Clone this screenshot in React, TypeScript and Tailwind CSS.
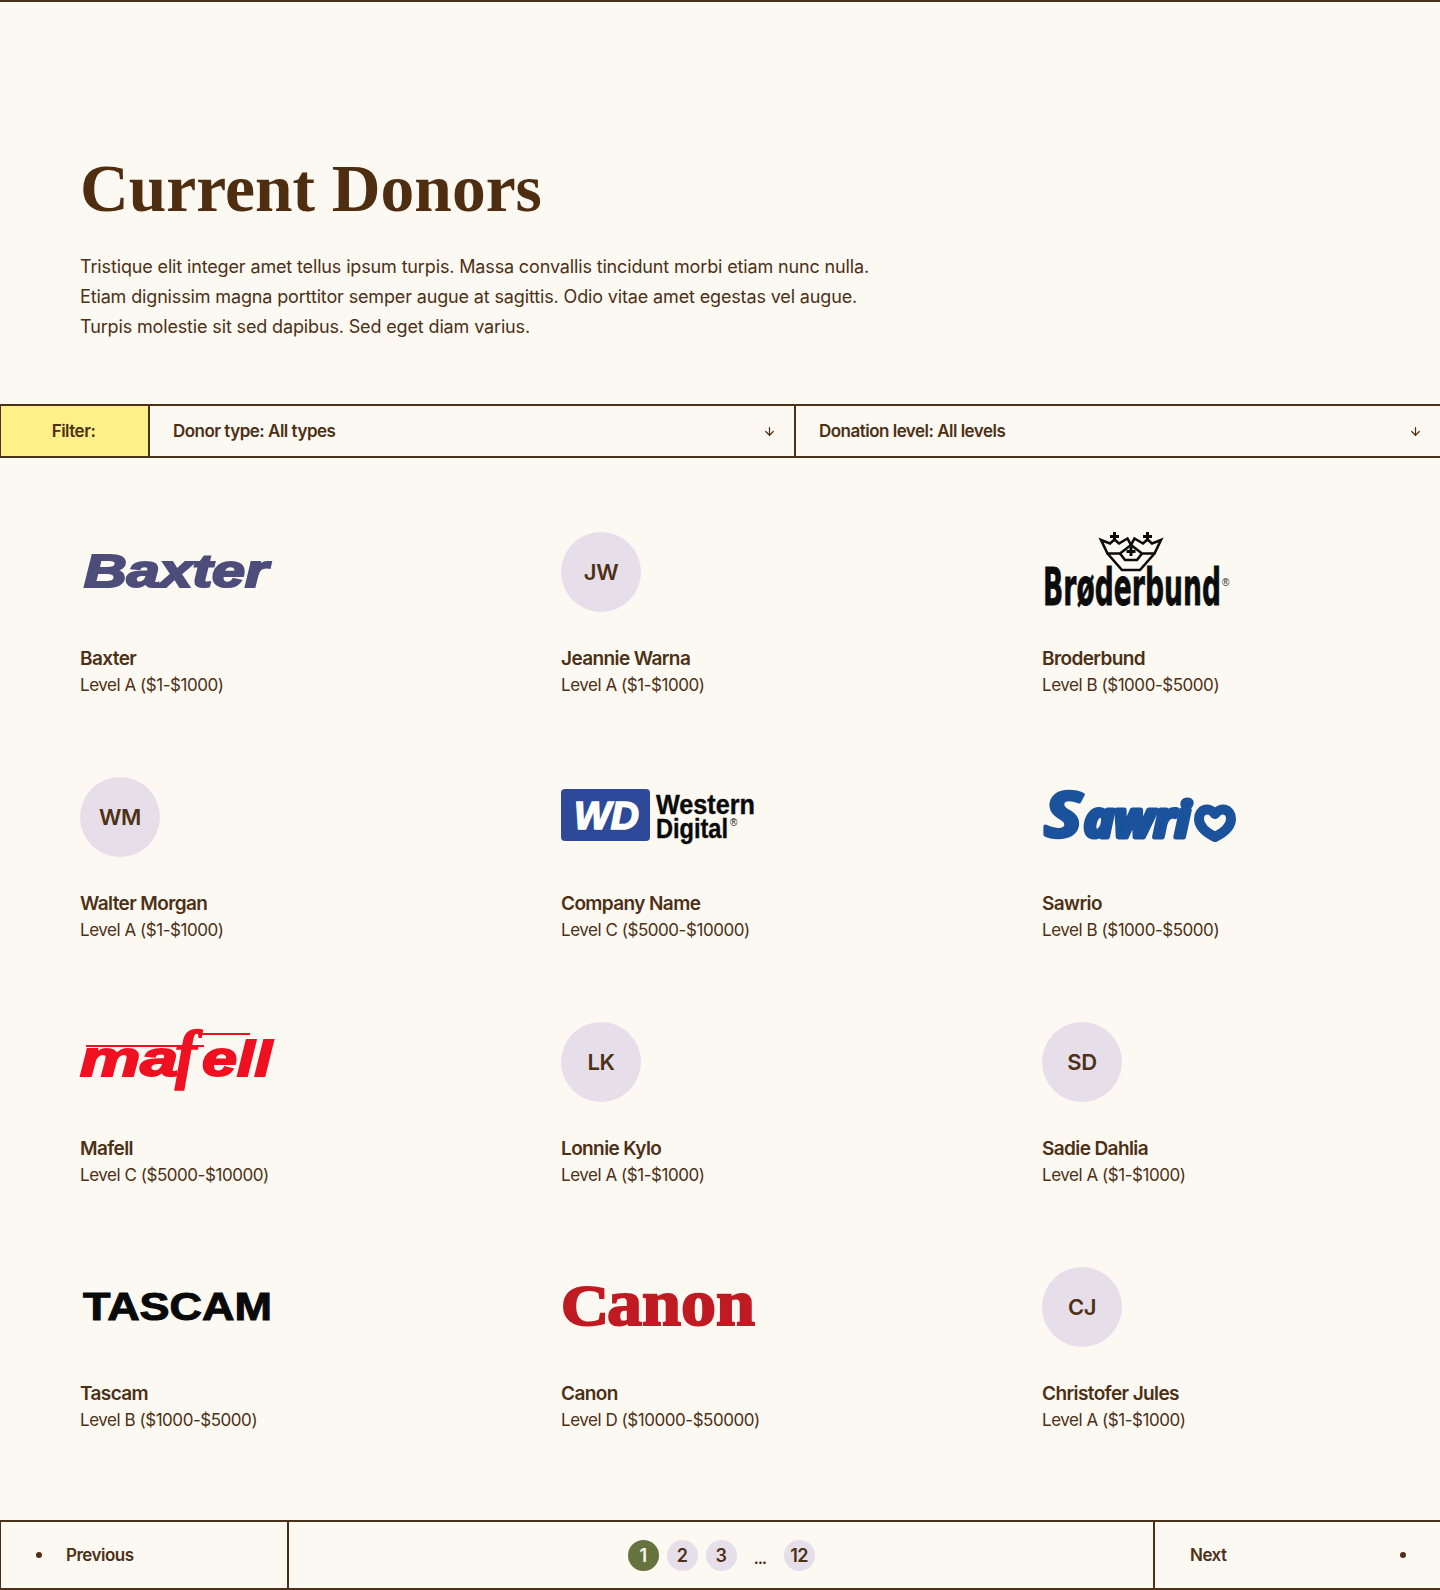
import { ArrowDown } from "lucide-react";

const sans = "[font-family:Inter,'Liberation_Sans',sans-serif]";

function Baxter() {
  return (
    <svg width="194" height="80" viewBox="0 0 194 80" className="overflow-visible">
      <text x="4" y="55" textLength="184" lengthAdjust="spacingAndGlyphs" fontFamily="'Liberation Sans'" fontWeight="700" fontStyle="italic" fontSize="46" fill="#4d4d7b" stroke="#4d4d7b" strokeWidth="2.2">Baxter</text>
    </svg>
  );
}

function Broderbund() {
  return (
    <svg width="194" height="80" viewBox="0 0 194 80" className="overflow-visible">
      <g fill="none" stroke="#0c0c0c" strokeWidth="2.6" strokeLinejoin="miter">
        <path d="M59 8 L68 11.500 L72.500 7.500 L77 11.500 L85.500 6.500 L89 13 L78 21.500 L65.500 21.500 Z" />
        <path d="M119 8 L110 11.500 L105.500 7.500 L101 11.500 L92.500 6.500 L89 13 L100 21.500 L112.500 21.500 Z" />
        <path d="M65.500 21.500 L80 38 L98 38 L112.500 21.500" />
        <path d="M78 21.500 L83 28 L95 28 L100 21.500" />
      </g>
      <g fill="#0c0c0c">
        <rect x="71" y="0" width="3" height="8" />
        <rect x="68" y="3" width="9" height="3" />
        <rect x="104" y="0" width="3" height="8" />
        <rect x="101" y="3" width="9" height="3" />
        <rect x="87.500" y="15" width="3" height="9" />
        <rect x="84.500" y="18" width="9" height="3" />
      </g>
      <text x="1" y="73" textLength="178" lengthAdjust="spacingAndGlyphs" fontFamily="'DejaVu Sans'" fontWeight="700" fontSize="52" fill="#0c0c0c" stroke="#0c0c0c" strokeWidth="0.8">Brøderbund</text>
      <text x="180" y="54" fontFamily="'Liberation Sans'" fontSize="10" fill="#222">®</text>
    </svg>
  );
}

function WesternDigital() {
  return (
    <svg width="194" height="80" viewBox="0 0 194 80" className="overflow-visible">
      <rect x="0" y="12" width="89" height="52" rx="4" fill="#2d4a9a" />
      <text x="13" y="52" textLength="65" lengthAdjust="spacingAndGlyphs" fontFamily="'Liberation Sans'" fontWeight="700" fontStyle="italic" fontSize="38" fill="#fff" stroke="#fff" strokeWidth="1.6">WD</text>
      <text x="95" y="37" textLength="99" lengthAdjust="spacingAndGlyphs" fontFamily="'Liberation Sans'" fontWeight="700" fontSize="27" fill="#0a0a0a" stroke="#0a0a0a" strokeWidth="0.4">Western</text>
      <text x="95" y="61" textLength="72" lengthAdjust="spacingAndGlyphs" fontFamily="'Liberation Sans'" fontWeight="700" fontSize="27" fill="#0a0a0a" stroke="#0a0a0a" strokeWidth="0.4">Digital</text>
      <text x="169" y="49" fontFamily="'Liberation Sans'" fontSize="10" fill="#0a0a0a">®</text>
    </svg>
  );
}

function Sawrio() {
  return (
    <svg width="194" height="80" viewBox="0 0 194 80" className="overflow-visible">
      <text x="2" y="60" textLength="38" lengthAdjust="spacingAndGlyphs" fontFamily="'Open Sans'" fontStyle="italic" fontWeight="700" fontSize="62" fill="#1a529c" stroke="#1a529c" strokeWidth="3.5" strokeLinejoin="round">S</text>
      <text x="42" y="60" textLength="106" lengthAdjust="spacingAndGlyphs" fontFamily="'Open Sans'" fontStyle="italic" fontWeight="700" fontSize="48" fill="#1a529c" stroke="#1a529c" strokeWidth="5" strokeLinejoin="round">awri</text>
      <path d="M173 37 C168 30 157 31 157 42 C157 50 165 56 173 60 C181 56 189 50 189 42 C189 31 178 30 173 37 Z" fill="none" stroke="#1a529c" strokeWidth="10" strokeLinejoin="round" />
    </svg>
  );
}

function Mafell() {
  return (
    <svg width="194" height="80" viewBox="0 0 194 80" className="overflow-visible">
      <rect x="6" y="23" width="118" height="2" fill="#ef1021" />
      <rect x="118" y="11" width="52" height="2" fill="#ef1021" />
      <text x="0" y="54" textLength="98" lengthAdjust="spacingAndGlyphs" fontFamily="'Liberation Sans'" fontWeight="700" fontStyle="italic" fontSize="50" fill="#ef1021" stroke="#ef1021" strokeWidth="2">ma</text>
      <text x="95" y="54" fontFamily="'Liberation Serif'" fontWeight="700" fontStyle="italic" fontSize="66" fill="#ef1021" stroke="#ef1021" strokeWidth="1.4">f</text>
      <text x="122" y="54" textLength="70" lengthAdjust="spacingAndGlyphs" fontFamily="'Liberation Sans'" fontWeight="700" fontStyle="italic" fontSize="50" fill="#ef1021" stroke="#ef1021" strokeWidth="2">ell</text>
    </svg>
  );
}

function Tascam() {
  return (
    <svg width="194" height="80" viewBox="0 0 194 80" className="overflow-visible">
      <text x="3" y="53" textLength="189" lengthAdjust="spacingAndGlyphs" fontFamily="'Liberation Sans'" fontWeight="700" fontSize="38" fill="#0a0a0a" stroke="#0a0a0a" strokeWidth="1">TASCAM</text>
    </svg>
  );
}

function Canon() {
  return (
    <svg width="194" height="80" viewBox="0 0 194 80" className="overflow-visible">
      <text x="0" y="58" textLength="48" lengthAdjust="spacingAndGlyphs" fontFamily="'Liberation Serif'" fontWeight="700" fontSize="56" fill="#c01a22" stroke="#c01a22" strokeWidth="2">C</text>
      <text x="46" y="58" textLength="148" lengthAdjust="spacingAndGlyphs" fontFamily="'Liberation Serif'" fontWeight="700" fontSize="66" fill="#c01a22" stroke="#c01a22" strokeWidth="2">anon</text>
    </svg>
  );
}

function Avatar({ t }: { t: string }) {
  return (
    <div className="flex h-20 w-20 items-center justify-center rounded-full bg-[#e6dfea] text-[22px] font-semibold tracking-[-0.02em] text-[#4d3015]">
      {t}
    </div>
  );
}

const donors: { name: string; level: string; logo: React.ReactNode }[] = [
  { name: "Baxter", level: "Level A ($1-$1000)", logo: <Baxter /> },
  { name: "Jeannie Warna", level: "Level A ($1-$1000)", logo: <Avatar t="JW" /> },
  { name: "Broderbund", level: "Level B ($1000-$5000)", logo: <Broderbund /> },
  { name: "Walter Morgan", level: "Level A ($1-$1000)", logo: <Avatar t="WM" /> },
  { name: "Company Name", level: "Level C ($5000-$10000)", logo: <WesternDigital /> },
  { name: "Sawrio", level: "Level B ($1000-$5000)", logo: <Sawrio /> },
  { name: "Mafell", level: "Level C ($5000-$10000)", logo: <Mafell /> },
  { name: "Lonnie Kylo", level: "Level A ($1-$1000)", logo: <Avatar t="LK" /> },
  { name: "Sadie Dahlia", level: "Level A ($1-$1000)", logo: <Avatar t="SD" /> },
  { name: "Tascam", level: "Level B ($1000-$5000)", logo: <Tascam /> },
  { name: "Canon", level: "Level D ($10000-$50000)", logo: <Canon /> },
  { name: "Christofer Jules", level: "Level A ($1-$1000)", logo: <Avatar t="CJ" /> },
];

function Page({ n, active }: { n: string; active?: boolean }) {
  return (
    <span
      className={
        "flex h-[31px] w-[31px] items-center justify-center rounded-full text-[18px] font-semibold tracking-[-0.03em] " +
        (active ? "bg-[#66733f] text-[#fcf9f3]" : "bg-[#e6dfea] text-[#4d3015]")
      }
    >
      {n}
    </span>
  );
}

function Select({ label }: { label: string }) {
  return (
    <div className="flex items-center justify-between border-l-2 border-[#4d3015] pl-[23px] pr-[18px]">
      <span className="pt-[2px] text-[17px] font-semibold tracking-[-0.03em]">{label}</span>
      <ArrowDown size={13} strokeWidth={2.25} />
    </div>
  );
}

export default function App() {
  return (
    <div className={`min-h-[1590px] bg-[#fcf9f3] text-[#4d3015] ${sans}`}>
      <div className="border-t-2 border-[#4d3015] px-20 pt-[149px]">
        <h1 className="[font-family:'Liberation_Serif',serif] text-[67.5px] font-bold leading-[76px] text-[#4f2d10]">
          Current Donors
        </h1>
        <p className="mt-[25px] w-[820px] text-[18px] leading-[30px] tracking-[-0.008em]">
          Tristique elit integer amet tellus ipsum turpis. Massa convallis tincidunt morbi etiam nunc nulla.
          <br />
          Etiam dignissim magna porttitor semper augue at sagittis. Odio vitae amet egestas vel augue.
          <br />
          Turpis molestie sit sed dapibus. Sed eget diam varius.
        </p>
      </div>

      <div className="mt-[62px] grid h-[54px] grid-cols-[148px_646px_1fr] border-y-2 border-[#4d3015]">
        <div className="flex items-center justify-center border-l border-[#4d3015] bg-[#fff08a] pr-[2px] pt-[2px] text-[17px] font-semibold tracking-[-0.03em]">
          Filter:
        </div>
        <Select label="Donor type: All types" />
        <Select label="Donation level: All levels" />
      </div>

      <div className="grid grid-cols-[repeat(3,318px)] gap-x-[163px] gap-y-[78px] px-20 pt-[74px]">
        {donors.map((d) => (
          <div key={d.name}>
            <div className="h-20">{d.logo}</div>
            <div className="mt-[33px] text-[19px] font-semibold leading-[27px] tracking-[-0.032em]">{d.name}</div>
            <div className="text-[17px] leading-[27px] tracking-[-0.027em]">{d.level}</div>
          </div>
        ))}
      </div>

      <div className="mt-[86px] grid h-[70px] grid-cols-[289px_1fr_287px] border-y-2 border-[#4d3015]">
        <div className="flex items-center border-l border-r-2 border-[#4d3015] pl-[35px] text-[17px] font-semibold tracking-[-0.03em]">
          <span className="h-[6px] w-[6px] rounded-full bg-[#4d3015]" />
          <span className="ml-[24px] pt-[2px]">Previous</span>
        </div>
        <div className="flex items-center justify-center gap-2">
          <Page n="1" active />
          <Page n="2" />
          <Page n="3" />
          <span className="flex w-[31px] justify-center pt-[6px] text-[14px] font-extrabold tracking-[-0.05em]">...</span>
          <Page n="12" />
        </div>
        <div className="flex items-center justify-between border-l-2 border-[#4d3015] pl-[35px] pr-[34px] text-[17px] font-semibold tracking-[-0.03em]">
          <span className="pt-[2px]">Next</span>
          <span className="h-[6px] w-[6px] rounded-full bg-[#4d3015]" />
        </div>
      </div>
    </div>
  );
}
